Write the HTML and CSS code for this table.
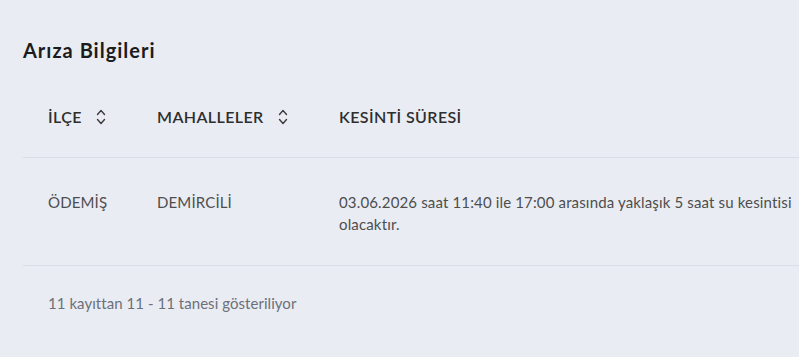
FILE: index.html
```html
<!DOCTYPE html>
<html lang="tr">
<head>
<meta charset="utf-8">
<title>Arıza Bilgileri</title>
<link rel="stylesheet" href="styles.css">
</head>
<body>
<div class="card">
  <h2 class="title">Arıza Bilgileri</h2>
  <table class="faults">
    <colgroup>
      <col class="c1"><col class="c2"><col class="c3">
    </colgroup>
    <thead>
      <tr>
        <th><span class="th-in">İLÇE<svg class="sort" viewBox="0 0 10 18" width="10" height="18"><path d="M1.5 6.5 L5 2.5 L8.5 6.5 M1.5 11.5 L5 15.5 L8.5 11.5" fill="none" stroke="#3a3a3a" stroke-width="1.4" stroke-linecap="round" stroke-linejoin="round"/></svg></span></th>
        <th><span class="th-in">MAHALLELER<svg class="sort" viewBox="0 0 10 18" width="10" height="18"><path d="M1.5 6.5 L5 2.5 L8.5 6.5 M1.5 11.5 L5 15.5 L8.5 11.5" fill="none" stroke="#3a3a3a" stroke-width="1.4" stroke-linecap="round" stroke-linejoin="round"/></svg></span></th>
        <th>KESİNTİ SÜRESİ</th>
      </tr>
    </thead>
    <tbody>
      <tr>
        <td>ÖDEMİŞ</td>
        <td>DEMİRCİLİ</td>
        <td>03.06.2026 saat 11:40 ile 17:00 arasında yaklaşık 5 saat su kesintisi olacaktır.</td>
      </tr>
    </tbody>
  </table>
  <div class="info">11 kayıttan 11 - 11 tanesi gösteriliyor</div>
</div>
</body>
</html>
```
FILE: styles.css
```css
html, body {
  margin: 0;
  padding: 0;
  background: #e9ecf3;
  overflow: hidden;
}
body {
  font-family: "Lato", "Open Sans", sans-serif;
  color: #4a4a4a;
}
.card {
  padding: 38px 0 0 23px;
}
.title {
  margin: 0 0 15px 0;
  font-size: 20px;
  line-height: 24px;
  font-weight: 700;
  letter-spacing: 1px;
  color: #1c1c1c;
}
.faults {
  border-collapse: collapse;
  table-layout: fixed;
  width: 801px;
}
.c1 { width: 109px; }
.c2 { width: 182px; }
.c3 { width: 510px; }
.faults th {
  text-align: left;
  padding: 30px 25px;
  font-size: 16px;
  line-height: 20px;
  font-weight: 600;
  letter-spacing: 0.4px;
  color: #2e2e2e;
  border-bottom: 1px solid #d9dee6;
  white-space: nowrap;
}
.th-in {
  display: inline-flex;
  align-items: center;
  gap: 14px;
}
.sort {
  display: block;
}
.faults td {
  padding: 33px 25px 30px 25px;
  font-size: 15px;
  line-height: 22px;
  letter-spacing: 0.15px;
  vertical-align: top;
  color: #4e4e4e;
  border-bottom: 1px solid #d9dee6;
}
.info {
  margin-top: 26px;
  padding-left: 25px;
  font-size: 15px;
  line-height: 22px;
  letter-spacing: 0.05px;
  color: #6d7079;
}
```
